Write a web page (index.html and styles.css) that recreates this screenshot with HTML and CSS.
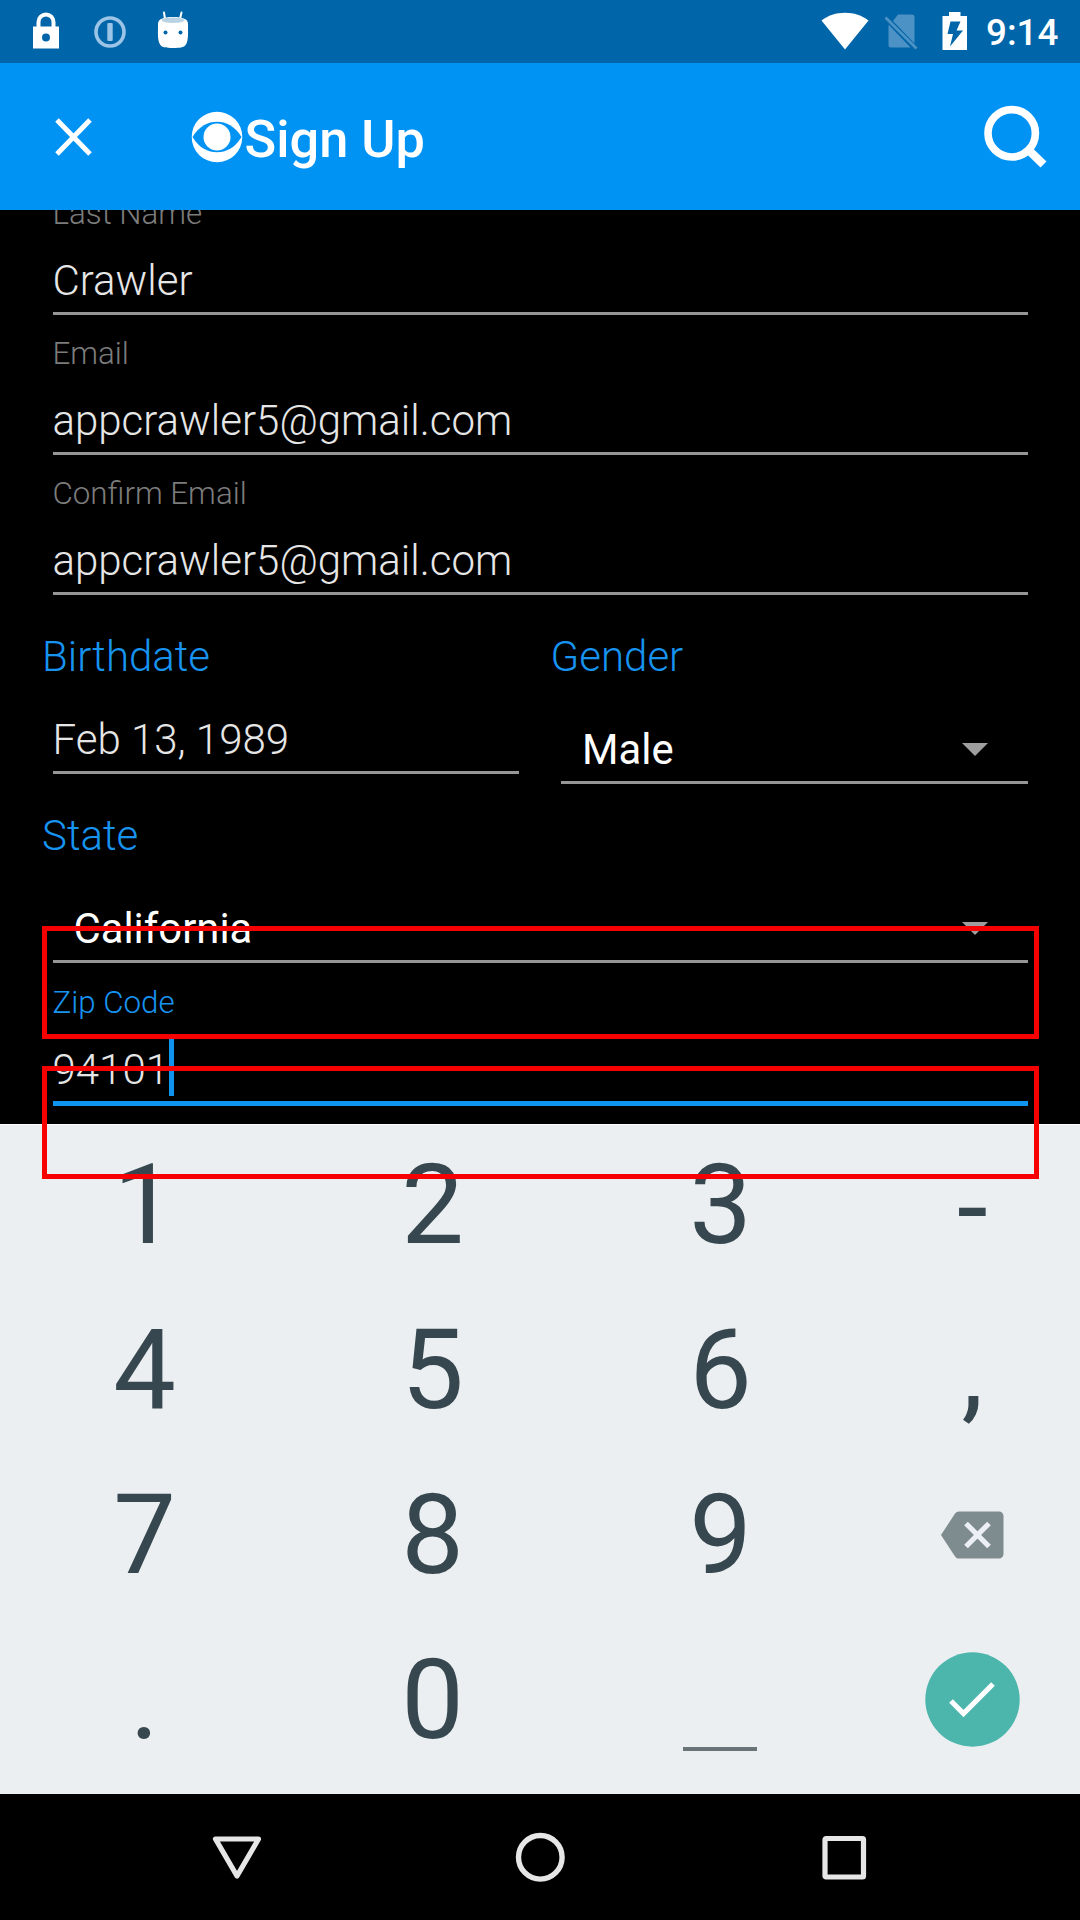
FILE: index.html
```html
<!DOCTYPE html>
<html lang="en">
<head>
<meta charset="utf-8">
<title>Sign Up</title>
<link rel="stylesheet" href="styles.css">
</head>
<body>
<div class="screen">
  <header class="status">
    <svg class="ic-lock" width="28" height="38" viewBox="0 0 28 38"><path d="M6.500 16V10a7.500 7.500 0 0 1 15 0v6" fill="none" stroke="#fff" stroke-width="4"/><path fill="#fff" fill-rule="evenodd" d="M1 14.500h26V36.500H1zM14 21.500a4 4 0 1 0 0 8a4 4 0 0 0 0-8z"/></svg>
    <svg class="ic-info" width="34" height="34" viewBox="0 0 34 34"><circle cx="17" cy="17" r="14" fill="none" stroke="#9cc4e6" stroke-width="3.600"/><rect x="14.300" y="8" width="5.400" height="18" rx="1" fill="#9cc4e6"/></svg>
    <svg class="ic-droid" width="32" height="38" viewBox="0 0 32 38"><path d="M8 8L7 1.500M23 8l1.500-6.500" stroke="#fff" stroke-width="2" stroke-linecap="round"/><path fill="#fff" d="M1 13C1 8 6 6 16 6s15 2 15 7c0 9 .5 15-1.500 19.500C28 36.500 23 37 16 37s-12-.5-13.500-4.500C.5 28 1 22 1 13z"/><ellipse cx="16" cy="9.300" rx="11.500" ry="2.800" fill="#b9d3e4"/><circle cx="8.500" cy="21.500" r="2" fill="#0065a9"/><circle cx="23.500" cy="21.500" r="2" fill="#0065a9"/></svg>
    <span class="grow"></span>
    <svg class="ic-wifi" width="48" height="38" viewBox="0 0 48 38"><path fill="#fff" d="M24 37.500L.5 8.500C7 3.500 15 .8 24 .8s17 2.700 23.500 7.700z"/></svg>
    <svg class="ic-sim" width="34" height="38" viewBox="0 0 34 38"><path fill="#4d92c5" d="M14 2.500H28a2.500 2.500 0 0 1 2.500 2.500v26.500L9 9zM4.500 12.500L26.500 35.500H7a2.500 2.500 0 0 1-2.500-2.500z"/><path d="M1.500 5.500l31 31" stroke="#4d92c5" stroke-width="2.800"/></svg>
    <svg class="ic-batt" width="26" height="38" viewBox="0 0 26 38"><path fill="#fff" fill-rule="evenodd" d="M7 0h11.500v4H25v34H.5V4H7zM8.500 9.500L5.500 22h5.500L8 34.500L21 18.500h-6.500L18.500 9.500z"/></svg>
    <span class="clock">9:14</span>
  </header>

  <nav class="appbar">
    <svg class="ic-close" width="38" height="40" viewBox="0 0 38 40"><path d="M2 3l33 34M35 3l-33 34" stroke="#fff" stroke-width="5"/></svg>
    <svg class="ic-eye" width="52" height="52" viewBox="0 0 52 52"><circle cx="26" cy="26" r="25.300" fill="#fff"/><path fill="#0093f4" d="M1.500 26C8 15 17 10.700 26 10.700S44 15 50.500 26C44 37 35 41.300 26 41.300S8 37 1.500 26z"/><circle cx="26" cy="26" r="13.500" fill="#fff"/></svg>
    <h1 class="title">Sign Up</h1>
    <svg class="ic-search" width="66" height="66" viewBox="0 0 66 66"><circle cx="28.700" cy="28.300" r="23.700" fill="none" stroke="#fff" stroke-width="7.600"/><path d="M45 44.500L60.500 59.500" stroke="#fff" stroke-width="8.500"/></svg>
  </nav>

  <main class="form">
    <div class="field"><label class="label">Last Name</label><div class="value">Crawler</div></div>
    <div class="field"><label class="label">Email</label><div class="value">appcrawler5@gmail.com</div></div>
    <div class="field"><label class="label">Confirm Email</label><div class="value">appcrawler5@gmail.com</div></div>
    <div class="columns">
      <section class="group">
        <h2 class="heading">Birthdate</h2>
        <div class="value date">Feb 13, 1989</div>
      </section>
      <section class="group">
        <h2 class="heading">Gender</h2>
        <div class="value select"><span>Male</span><i class="caret"></i></div>
      </section>
    </div>
    <section class="group state">
      <h2 class="heading">State</h2>
      <div class="value select"><span>California</span><i class="caret"></i></div>
    </section>
    <div class="field active"><label class="label">Zip Code</label><div class="value"><span>94101</span><i class="cursor"></i></div></div>
  </main>

  <section class="keyboard">
    <div class="keys">
      <span>1</span><span>2</span><span>3</span><span class="hyphen">-</span>
      <span>4</span><span>5</span><span>6</span><span>,</span>
      <span>7</span><span>8</span><span>9</span>
      <span class="icon-key"><svg width="64" height="48" viewBox="0 0 64 48"><path fill="#7f8c8f" d="M19 .5h40a4.500 4.500 0 0 1 4.500 4.500v38a4.500 4.500 0 0 1-4.500 4.500H19c-2 0-3.200-1-4.300-2.600L1 24L14.700 3.100C15.800 1.500 17 .5 19 .5z"/><path d="M26 12.500l23 23M49 12.500l-23 23" stroke="#eceff6" stroke-width="5.200"/></svg></span>
      <span>.</span><span>0</span><span class="space"><i></i></span>
      <span class="icon-key"><svg width="95" height="95" viewBox="0 0 95 95"><circle cx="47.500" cy="47.500" r="47.200" fill="#4db6ac"/><path d="M26 49l12.500 12.500L68 32" fill="none" stroke="#fff" stroke-width="5.200"/></svg></span>
    </div>
  </section>

  <footer class="navbar">
    <svg width="52" height="52" viewBox="0 0 52 52"><path d="M5.500 8h43L27 45z" fill="none" stroke="#e6e6e6" stroke-width="5.200" stroke-linejoin="round"/></svg>
    <svg width="52" height="52" viewBox="0 0 52 52"><circle cx="26.300" cy="26.300" r="21.800" fill="none" stroke="#e6e6e6" stroke-width="5.400"/></svg>
    <svg width="52" height="52" viewBox="0 0 52 52"><rect x="7" y="7.500" width="38.500" height="38.500" rx="1" fill="none" stroke="#e6e6e6" stroke-width="5.200"/></svg>
  </footer>

  <div class="outline outline-a"></div>
  <div class="outline outline-b"></div>
</div>
</body>
</html>
```
FILE: styles.css
```css
* { box-sizing: border-box; }
body { margin: 0; background: #000; font-family: Roboto, "Liberation Sans", sans-serif; }
svg { display: block; flex: none; }
h1, h2 { margin: 0; }
.screen { position: relative; display: flex; flex-direction: column; width: 1080px; height: 1920px; overflow: hidden; }

.status { display: flex; align-items: flex-start; height: 63px; padding: 12px 21px 0 32px; background: #0065a9; }
.ic-info { margin: 3px 0 0 33px; }
.ic-droid { margin: -1px 0 0 30px; }
.grow { flex: 1; }
.ic-sim { margin-left: 15px; }
.ic-batt { margin-left: 24px; }
.clock { margin-left: 18px; width: 73px; color: #fff; font-size: 36.75px; font-weight: 500; line-height: 42px; white-space: nowrap; }

.appbar { display: flex; align-items: center; height: 147px; padding: 0 31px 0 55px; background: #0093f4; color: #fff; }
.ic-eye { margin-left: 98px; }
.title { margin: 4px 0 0 1.5px; flex: 1; font-size: 52.3px; font-weight: 500; line-height: 62px; }
.ic-search { margin-top: 3px; }

.form { height: 914px; padding: 0 42px; overflow: hidden; }
.form > :first-child { margin-top: -35.5px; }
.field { height: 140px; padding: 18px 10.5px 0; }
.label { display: block; margin-bottom: 14px; color: #7c7c7c; font-size: 31.3px; font-weight: 300; line-height: 42px; }
.value { height: 66px; border-bottom: 3px solid #969696; color: #e6e6e6; font-size: 42px; font-weight: 300; line-height: 63px; }
.columns { display: grid; grid-template-columns: 1fr 1fr; column-gap: 21px; height: 189.5px; padding-top: 37.5px; }
.heading { color: #1793f0; font-size: 42px; font-weight: 300; line-height: 49px; }
.group .value { margin: 37px 10.5px 0; }
.group .value.date { margin: 27px 0 0 10.5px; width: 466.5px; }
.select { display: flex; align-items: center; justify-content: space-between; padding: 0 40px 0 21px; }
.group .select { color: #fff; font-size: 41.8px; font-weight: 400; }
.caret { border: 13px solid transparent; border-top-color: #9e9e9e; border-bottom: 0; }
.state { height: 180px; padding-top: 27px; }
.active .label { color: #1793f0; }
.active .value { display: flex; height: 68px; border-bottom: 5px solid #0f93ee; }
.cursor { width: 5px; height: 57px; margin: 1px 0 0; background: #0f93ee; }

.keyboard { height: 670px; border-top: 1px solid #fff; background: #eceff1; }
.keys { display: grid; grid-template-columns: 288px 288px 288px 216px; grid-auto-rows: 165px; margin-top: -3px; color: #37474f; font-size: 111.5px; line-height: 165px; }
.keys span { display: flex; align-items: center; justify-content: center; height: 165px; padding: 2px 0 0 1px; }
.keys .hyphen { padding-top: 7px; }
.keys .icon-key { padding: 0; }
.keys .space { align-items: flex-end; padding: 0 0 31px; }
.space i { width: 74px; height: 4px; background: #687478; }

.navbar { display: flex; justify-content: space-between; height: 126px; padding: 37px 210px 0; background: #000; }

.outline { position: absolute; left: 42px; width: 997px; height: 113px; border: 5px solid #f70000; }
.outline-a { top: 926px; }
.outline-b { top: 1066px; }
```
